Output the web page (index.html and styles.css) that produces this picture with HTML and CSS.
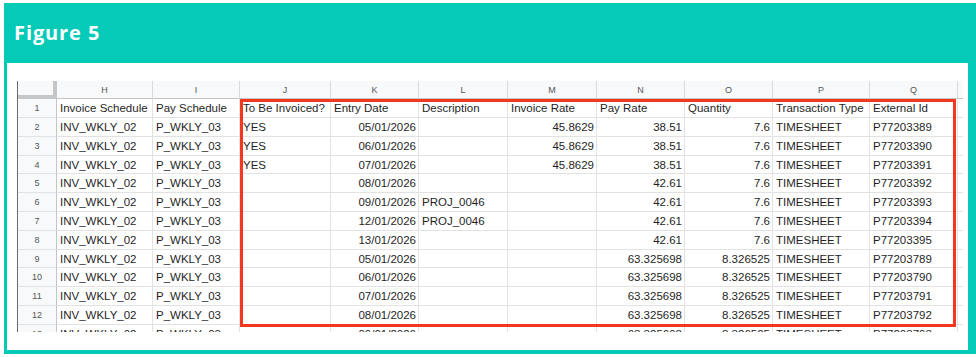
FILE: index.html
```html
<!DOCTYPE html>
<html lang="en">
<head>
<meta charset="utf-8">
<title>Figure 5</title>
<link rel="stylesheet" href="styles.css">
</head>
<body>
<div class="frame">
  <div class="banner"><h1 class="title">Figure 5</h1></div>
  <div class="body">
    <div class="viewport">
      <div class="sheet">
        <div class="corner"></div><div class="ch">H</div><div class="ch">I</div><div class="ch">J</div><div class="ch">K</div><div class="ch">L</div><div class="ch">M</div><div class="ch">N</div><div class="ch">O</div><div class="ch">P</div><div class="ch">Q</div><div class="ch stub"></div>

        <div class="rh">1</div><div class="c">Invoice Schedule</div><div class="c">Pay Schedule</div><div class="c">To Be Invoiced?</div><div class="c">Entry Date</div><div class="c">Description</div><div class="c">Invoice Rate</div><div class="c">Pay Rate</div><div class="c">Quantity</div><div class="c">Transaction Type</div><div class="c">External Id</div><div class="c stub"></div>

        <div class="rh">2</div><div class="c">INV_WKLY_02</div><div class="c">P_WKLY_03</div><div class="c">YES</div><div class="c r">05/01/2026</div><div class="c"></div><div class="c r">45.8629</div><div class="c r">38.51</div><div class="c r">7.6</div><div class="c">TIMESHEET</div><div class="c">P77203389</div><div class="c stub"></div>

        <div class="rh">3</div><div class="c">INV_WKLY_02</div><div class="c">P_WKLY_03</div><div class="c">YES</div><div class="c r">06/01/2026</div><div class="c"></div><div class="c r">45.8629</div><div class="c r">38.51</div><div class="c r">7.6</div><div class="c">TIMESHEET</div><div class="c">P77203390</div><div class="c stub"></div>

        <div class="rh">4</div><div class="c">INV_WKLY_02</div><div class="c">P_WKLY_03</div><div class="c">YES</div><div class="c r">07/01/2026</div><div class="c"></div><div class="c r">45.8629</div><div class="c r">38.51</div><div class="c r">7.6</div><div class="c">TIMESHEET</div><div class="c">P77203391</div><div class="c stub"></div>

        <div class="rh">5</div><div class="c">INV_WKLY_02</div><div class="c">P_WKLY_03</div><div class="c"></div><div class="c r">08/01/2026</div><div class="c"></div><div class="c"></div><div class="c r">42.61</div><div class="c r">7.6</div><div class="c">TIMESHEET</div><div class="c">P77203392</div><div class="c stub"></div>

        <div class="rh">6</div><div class="c">INV_WKLY_02</div><div class="c">P_WKLY_03</div><div class="c"></div><div class="c r">09/01/2026</div><div class="c">PROJ_0046</div><div class="c"></div><div class="c r">42.61</div><div class="c r">7.6</div><div class="c">TIMESHEET</div><div class="c">P77203393</div><div class="c stub"></div>

        <div class="rh">7</div><div class="c">INV_WKLY_02</div><div class="c">P_WKLY_03</div><div class="c"></div><div class="c r">12/01/2026</div><div class="c">PROJ_0046</div><div class="c"></div><div class="c r">42.61</div><div class="c r">7.6</div><div class="c">TIMESHEET</div><div class="c">P77203394</div><div class="c stub"></div>

        <div class="rh">8</div><div class="c">INV_WKLY_02</div><div class="c">P_WKLY_03</div><div class="c"></div><div class="c r">13/01/2026</div><div class="c"></div><div class="c"></div><div class="c r">42.61</div><div class="c r">7.6</div><div class="c">TIMESHEET</div><div class="c">P77203395</div><div class="c stub"></div>

        <div class="rh">9</div><div class="c">INV_WKLY_02</div><div class="c">P_WKLY_03</div><div class="c"></div><div class="c r">05/01/2026</div><div class="c"></div><div class="c"></div><div class="c r">63.325698</div><div class="c r">8.326525</div><div class="c">TIMESHEET</div><div class="c">P77203789</div><div class="c stub"></div>

        <div class="rh">10</div><div class="c">INV_WKLY_02</div><div class="c">P_WKLY_03</div><div class="c"></div><div class="c r">06/01/2026</div><div class="c"></div><div class="c"></div><div class="c r">63.325698</div><div class="c r">8.326525</div><div class="c">TIMESHEET</div><div class="c">P77203790</div><div class="c stub"></div>

        <div class="rh">11</div><div class="c">INV_WKLY_02</div><div class="c">P_WKLY_03</div><div class="c"></div><div class="c r">07/01/2026</div><div class="c"></div><div class="c"></div><div class="c r">63.325698</div><div class="c r">8.326525</div><div class="c">TIMESHEET</div><div class="c">P77203791</div><div class="c stub"></div>

        <div class="rh">12</div><div class="c">INV_WKLY_02</div><div class="c">P_WKLY_03</div><div class="c"></div><div class="c r">08/01/2026</div><div class="c"></div><div class="c"></div><div class="c r">63.325698</div><div class="c r">8.326525</div><div class="c">TIMESHEET</div><div class="c">P77203792</div><div class="c stub"></div>

        <div class="rh">13</div><div class="c">INV_WKLY_02</div><div class="c">P_WKLY_03</div><div class="c"></div><div class="c r">09/01/2026</div><div class="c"></div><div class="c"></div><div class="c r">63.325698</div><div class="c r">8.326525</div><div class="c">TIMESHEET</div><div class="c">P77203793</div><div class="c stub"></div>
      </div>
      <div class="highlight"></div>
    </div>
  </div>
</div>
</body>
</html>
```

FILE: styles.css
```css
* { box-sizing: border-box; }

html, body {
  margin: 0;
  padding: 0;
  background: #ffffff;
}

.frame {
  margin: 3px 0 0 4px;
  border-style: solid;
  border-color: #05cab7;
  border-width: 0 8px 4px 3px;
  width: 972px;
}

.banner {
  height: 60px;
  background: #05cab7;
  display: flex;
  align-items: center;
  padding-left: 7px;
}

.title {
  margin: 0;
  font-family: "Open Sans", "Liberation Sans", sans-serif;
  font-weight: 700;
  font-size: 20px;
  line-height: 22px;
  color: #ffffff;
  letter-spacing: 0.9px;
}

.body {
  background: #ffffff;
  padding: 17.5px 0 18px 10px;
}

.viewport {
  position: relative;
  height: 251.5px;
  width: 946px;
  overflow: hidden;
  border-left: 1px solid #6a6a6a;
}

.sheet {
  display: grid;
  grid-template-columns: 39px 96px 87px 91px 88px 89px 89px 88px 88px 97px 88px 6px;
  grid-auto-rows: 18.8px;
  font-family: "Liberation Sans", Arial, sans-serif;
  font-size: 11.5px;
  color: #1f1f1f;
}

.c {
  border-right: 1px solid #e2e2e2;
  border-bottom: 1px solid #e2e2e2;
  padding: 0 2px 0 3px;
  line-height: 18px;
  white-space: nowrap;
  overflow: hidden;
}

.r { text-align: right; }

.ch {
  background: #f8f9fa;
  border-right: 1px solid #dadada;
  border-bottom: 1px solid #c4c4c4;
  font-size: 9px;
  color: #555555;
  text-align: center;
  line-height: 18px;
}

.corner {
  background: #f8f9fa;
  border-right: 4px solid #c6c6c6;
  border-bottom: 4px solid #c6c6c6;
}

.rh {
  background: #f8f9fa;
  border-right: 1px solid #c4c4c4;
  border-bottom: 1px solid #e2e2e2;
  font-size: 9px;
  color: #555555;
  text-align: center;
  line-height: 18px;
}

.stub { border-right: 0; padding: 0; }

.highlight {
  position: absolute;
  left: 222px;
  top: 18px;
  width: 716px;
  height: 228px;
  border: 3px solid #f2391f;
  pointer-events: none;
}
```
